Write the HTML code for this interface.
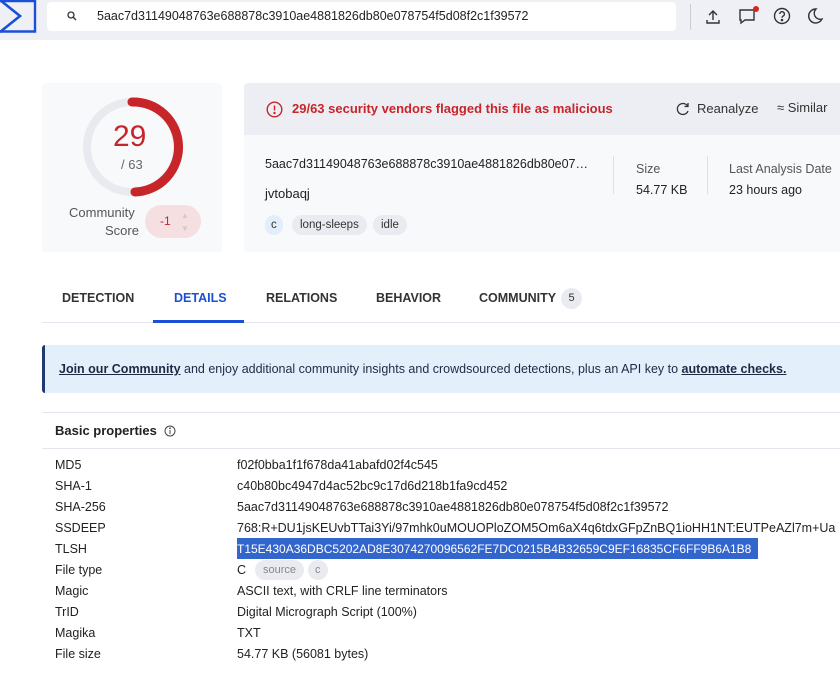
<!DOCTYPE html>
<html><head><meta charset="utf-8"><style>
*{margin:0;padding:0;box-sizing:border-box}
body{width:840px;height:673px;overflow:hidden;background:#fff;font-family:"Liberation Sans",sans-serif;color:#222;position:relative;font-size:12.5px}
.a{position:absolute;white-space:nowrap}
.top{left:0;top:0;width:840px;height:40px;background:#eef0f5}
.search{left:47px;top:2px;width:629px;height:29px;background:#fff;border-radius:4px}
.card1{left:42px;top:83px;width:180px;height:169px;background:#f8f9fb;border-radius:4px}
.card2{left:244px;top:83px;width:600px;height:169px;background:#f8f9fb;border-radius:4px}
.hdr{left:244px;top:83px;width:600px;height:52px;background:#eceef3;border-radius:4px 0 0 0}
.tag{position:absolute;height:20px;line-height:20px;border-radius:10px;background:#e9ebf0;font-size:11.5px;color:#333;padding:0 8px}
.tab{top:291px;font-size:12.5px;font-weight:bold;color:#333}
.k{left:55px;color:#222}
.v{left:237px;color:#222}
</style></head><body>
<div class="a top"></div>
<svg class="a" style="left:0;top:0" width="38" height="34" viewBox="0 0 38 34"><path d="M0 1H35V31.5H0" fill="none" stroke="#1b4fd6" stroke-width="2.4"/><path d="M0 0 L20 16 L0 32" fill="none" stroke="#1b4fd6" stroke-width="2.6"/></svg>
<div class="a search"></div>
<svg class="a" style="left:67px;top:11px" width="10" height="10" viewBox="0 0 10 10"><circle cx="4" cy="4" r="3" fill="none" stroke="#333" stroke-width="1.3"/><path d="M6 6l3 3" stroke="#333" stroke-width="1.3"/></svg>
<div class="a" style="left:97px;top:9px;font-size:12.5px;color:#222">5aac7d31149048763e688878c3910ae4881826db80e078754f5d08f2c1f39572</div>
<div class="a" style="left:690px;top:4px;width:1px;height:26px;background:#c8ccd4"></div>
<svg class="a" style="left:704px;top:8px" width="18" height="18" viewBox="0 0 18 18" fill="none" stroke="#333" stroke-width="1.4"><path d="M9 3v9M5 7l4-4 4 4M3 12v3h12v-3"/></svg>
<svg class="a" style="left:738px;top:6px" width="22" height="20" viewBox="0 0 22 20" fill="none" stroke="#333" stroke-width="1.4"><path d="M2 4h14v10H7l-4 3v-3H2z"/><circle cx="18" cy="3" r="3" fill="#d22" stroke="none"/></svg>
<svg class="a" style="left:773px;top:7px" width="18" height="18" viewBox="0 0 18 18" fill="none" stroke="#333" stroke-width="1.4"><circle cx="9" cy="9" r="7.5"/><path d="M6.8 7a2.3 2.3 0 1 1 3 2.2c-.6.3-.8.7-.8 1.5"/><circle cx="9" cy="13" r=".6" fill="#333"/></svg>
<svg class="a" style="left:806px;top:7px" width="18" height="18" viewBox="0 0 18 18" fill="none" stroke="#333" stroke-width="1.4"><path d="M10 2a7 7 0 1 0 6 10A6 6 0 0 1 10 2z"/></svg>

<div class="a card1"></div>
<svg class="a" style="left:81px;top:96px" width="102" height="102" viewBox="0 0 102 102"><circle cx="51" cy="51" r="45" fill="none" stroke="#e8eaef" stroke-width="8"/><path d="M51 6 A45 45 0 0 1 54 96" fill="none" stroke="#c8252a" stroke-width="9" stroke-linecap="round"/></svg>
<div class="a" style="left:113px;top:120px;font-size:30px;color:#c8252a">29</div>
<div class="a" style="left:121px;top:157px;font-size:13px;color:#666">/ 63</div>
<div class="a" style="left:69px;top:205px;font-size:13px;color:#555">Community</div>
<div class="a" style="left:105px;top:223px;font-size:13px;color:#555">Score</div>
<div class="a" style="left:145px;top:205px;width:56px;height:33px;border-radius:17px;background:#f5dfe0"></div>
<div class="a" style="left:160px;top:214px;font-size:12px;color:#c8252a">-1</div>
<div class="a" style="left:181px;top:209px;font-size:8px;color:#ccc;line-height:13px">▲<br>▼</div>

<div class="a card2"></div>
<div class="a hdr"></div>
<svg class="a" style="left:266px;top:101px" width="17" height="17" viewBox="0 0 17 17" fill="none" stroke="#c8252a" stroke-width="1.4"><circle cx="8.5" cy="8.5" r="7.3"/><path d="M8.5 4.5v5"/><circle cx="8.5" cy="12" r=".5" fill="#c8252a"/></svg>
<div class="a" style="left:292px;top:101px;font-size:13px;font-weight:bold;color:#c8252a">29/63 security vendors flagged this file as malicious</div>
<svg class="a" style="left:676px;top:102px" width="14" height="14" viewBox="0 0 14 14" fill="none" stroke="#333" stroke-width="1.3"><path d="M11.5 4A5.5 5.5 0 1 0 12 9M12 1v3.5H8.5"/></svg>
<div class="a" style="left:697px;top:101px;font-size:13px;color:#333">Reanalyze</div>
<div class="a" style="left:777px;top:100px;font-size:13px;color:#333">≈ Similar</div>
<div class="a" style="left:265px;top:157px;font-size:12.5px">5aac7d31149048763e688878c3910ae4881826db80e07…</div>
<div class="a" style="left:265px;top:186px;font-size:13px">jvtobaqj</div>
<div class="a" style="left:613px;top:156px;width:1px;height:38px;background:#dde0e6"></div>
<div class="a" style="left:636px;top:162px;font-size:12.5px;color:#555">Size</div>
<div class="a" style="left:636px;top:183px;font-size:12.5px">54.77 KB</div>
<div class="a" style="left:707px;top:156px;width:1px;height:38px;background:#dde0e6"></div>
<div class="a" style="left:729px;top:162px;font-size:12.5px;color:#555">Last Analysis Date</div>
<div class="a" style="left:729px;top:183px;font-size:12.5px">23 hours ago</div>
<div class="tag" style="left:265px;top:215px;background:#e3eefb;padding:0 6px">c</div>
<div class="tag" style="left:292px;top:215px">long-sleeps</div>
<div class="tag" style="left:373px;top:215px">idle</div>

<div class="a tab" style="left:62px">DETECTION</div>
<div class="a tab" style="left:174px;color:#1b4fd6">DETAILS</div>
<div class="a tab" style="left:266px">RELATIONS</div>
<div class="a tab" style="left:376px">BEHAVIOR</div>
<div class="a tab" style="left:479px">COMMUNITY</div>
<div class="a" style="left:561px;top:288px;width:21px;height:21px;border-radius:50%;background:#e9ebf0;font-size:11px;text-align:center;line-height:21px;color:#333">5</div>
<div class="a" style="left:42px;top:322px;width:798px;height:1px;background:#e3e6ec"></div>
<div class="a" style="left:153px;top:320px;width:91px;height:3px;background:#1b4fd6"></div>

<div class="a" style="left:42px;top:345px;width:798px;height:48px;background:#e3f0fb;border-left:3px solid #1e3a6e;border-radius:3px 0 0 3px"></div>
<div class="a" style="left:59px;top:362px;font-size:12.5px;color:#1e2a44"><b style="text-decoration:underline">Join our Community</b> and enjoy additional community insights and crowdsourced detections, plus an API key to <b style="text-decoration:underline">automate checks.</b></div>

<div class="a" style="left:42px;top:412px;width:798px;height:1px;background:#e3e6ec"></div>
<div class="a" style="left:55px;top:423px;font-size:13px;font-weight:bold">Basic properties</div>
<svg class="a" style="left:164px;top:425px" width="12" height="12" viewBox="0 0 12 12" fill="none" stroke="#444" stroke-width="1"><circle cx="6" cy="6" r="5"/><path d="M6 5v4"/><circle cx="6" cy="3.3" r=".4" fill="#444"/></svg>
<div class="a" style="left:42px;top:448px;width:798px;height:1px;background:#e3e6ec"></div>

<div class="a k" style="top:458px">MD5</div><div class="a v" style="top:458px">f02f0bba1f1f678da41abafd02f4c545</div>
<div class="a k" style="top:479px">SHA-1</div><div class="a v" style="top:479px">c40b80bc4947d4ac52bc9c17d6d218b1fa9cd452</div>
<div class="a k" style="top:500px">SHA-256</div><div class="a v" style="top:500px">5aac7d31149048763e688878c3910ae4881826db80e078754f5d08f2c1f39572</div>
<div class="a k" style="top:521px">SSDEEP</div><div class="a v" style="top:521px">768:R+DU1jsKEUvbTTai3Yi/97mhk0uMOUOPloZOM5Om6aX4q6tdxGFpZnBQ1ioHH1NT:EUTPeAZl7m+Ua</div>
<div class="a k" style="top:542px">TLSH</div><div class="a" style="left:237px;top:538px;width:521px;height:21px;background:#3366cc"></div><div class="a v" style="top:542px;color:#fff;font-size:12px">T15E430A36DBC5202AD8E3074270096562FE7DC0215B4B32659C9EF16835CF6FF9B6A1B8</div>
<div class="a k" style="top:563px">File type</div><div class="a v" style="top:563px">C</div>
<div class="tag" style="left:255px;top:560px;color:#888;font-size:11px">source</div>
<div class="tag" style="left:308px;top:560px;color:#888;font-size:11px;padding:0 7px">c</div>
<div class="a k" style="top:584px">Magic</div><div class="a v" style="top:584px">ASCII text, with CRLF line terminators</div>
<div class="a k" style="top:605px">TrID</div><div class="a v" style="top:605px">Digital Micrograph Script (100%)</div>
<div class="a k" style="top:626px">Magika</div><div class="a v" style="top:626px">TXT</div>
<div class="a k" style="top:647px">File size</div><div class="a v" style="top:647px">54.77 KB (56081 bytes)</div>
</body></html>
